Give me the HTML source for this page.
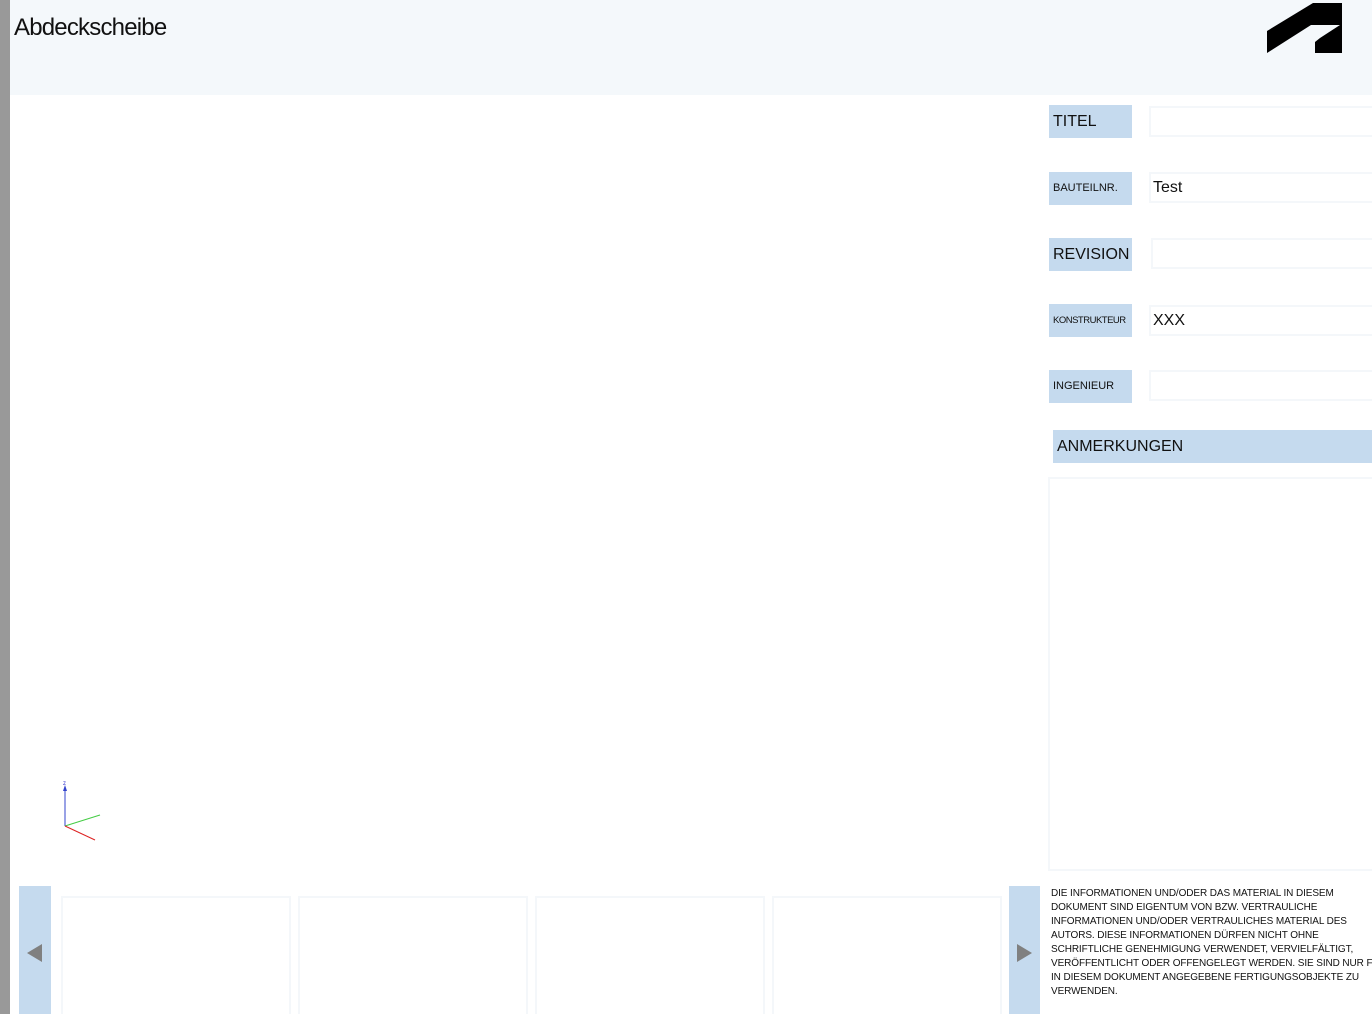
<!DOCTYPE html>
<html style="overflow:hidden;height:1014px"><head><meta charset="utf-8"><style>
html,body{margin:0;width:1372px;height:1014px;overflow:hidden}
body{background:#fff;font-family:"Liberation Sans",sans-serif;position:relative}
div{position:absolute;box-sizing:border-box}
.lab{background:#c5daee;color:#111;left:1049px;width:83px;height:33px;line-height:33px;padding-left:4px;white-space:nowrap}
.fld{left:1149px;width:223px;height:31px;border:2px solid #f4f7fa;border-right:0;line-height:27px;padding-left:2px;font-size:16px;color:#111}
.th{top:896px;width:230px;height:118px;border:2px solid #f4f7fa;border-bottom:0}
.nav{top:886px;width:32px;height:128px;background:#c5daee}
.tx{font-size:10px;line-height:14px;color:#111;white-space:nowrap;left:1051px;top:887px;letter-spacing:-0.1px}
</style></head><body>
<div style="left:0;top:0;width:10px;height:1014px;background:#999"></div>
<div style="left:10px;top:0;width:1362px;height:95px;background:#f4f8fb"></div>
<div style="left:14px;top:14px;font-size:24px;color:#111;letter-spacing:-0.8px">Abdeckscheibe</div>
<svg style="position:absolute;left:0;top:0" width="1372" height="60"><polygon points="1267,31 1313,3 1342,3 1342,53 1315,53 1315,42 1320,38 1340,25 1311,25 1267,53" fill="#000"/></svg>
<div class="lab" style="top:105px;font-size:16px">TITEL</div><div class="fld" style="top:106px"></div>
<div class="lab" style="top:172px;font-size:11px">BAUTEILNR.</div><div class="fld" style="top:172px">Test</div>
<div class="lab" style="top:238px;font-size:16px">REVISION</div><div class="fld" style="top:238px;left:1151px"></div>
<div class="lab" style="top:304px;font-size:9.5px;letter-spacing:-0.5px">KONSTRUKTEUR</div><div class="fld" style="top:305px">XXX</div>
<div class="lab" style="top:370px;font-size:11px">INGENIEUR</div><div class="fld" style="top:370px"></div>
<div class="lab" style="top:430px;left:1053px;width:319px;height:33px;font-size:16px">ANMERKUNGEN</div>
<div style="left:1048px;top:477px;width:324px;height:394px;border:2px solid #f4f7fa;border-right:0"></div>
<svg style="position:absolute;left:55px;top:778px" width="60" height="70">
<line x1="10" y1="48" x2="10" y2="10" stroke="#3344cc" stroke-width="1"/><polygon points="8,13 10,7 12,13" fill="#3344cc"/>
<text x="8" y="7" font-size="6" fill="#33c">z</text>
<line x1="10" y1="48" x2="45" y2="37" stroke="#44cc44" stroke-width="1"/>
<line x1="10" y1="48" x2="40" y2="62" stroke="#dd2222" stroke-width="1"/></svg>
<div class="nav" style="left:19px"></div>
<svg style="position:absolute;left:27px;top:944px" width="16" height="18"><polygon points="15,0 15,18 0,9" fill="#808080"/></svg>
<div class="th" style="left:61px"></div><div class="th" style="left:298px"></div><div class="th" style="left:535px"></div><div class="th" style="left:772px"></div>
<div class="nav" style="left:1009px;width:31px"></div>
<svg style="position:absolute;left:1017px;top:944px" width="16" height="18"><polygon points="0,0 0,18 15,9" fill="#808080"/></svg>
<div class="tx">DIE INFORMATIONEN UND/ODER DAS MATERIAL IN DIESEM<br>DOKUMENT SIND EIGENTUM VON BZW. VERTRAULICHE<br>INFORMATIONEN UND/ODER VERTRAULICHES MATERIAL DES<br>AUTORS. DIESE INFORMATIONEN DÜRFEN NICHT OHNE<br>SCHRIFTLICHE GENEHMIGUNG VERWENDET, VERVIELFÄLTIGT,<br>VERÖFFENTLICHT ODER OFFENGELEGT WERDEN. SIE SIND NUR FÜR<br>IN DIESEM DOKUMENT ANGEGEBENE FERTIGUNGSOBJEKTE ZU<br>VERWENDEN.</div>
</body></html>
